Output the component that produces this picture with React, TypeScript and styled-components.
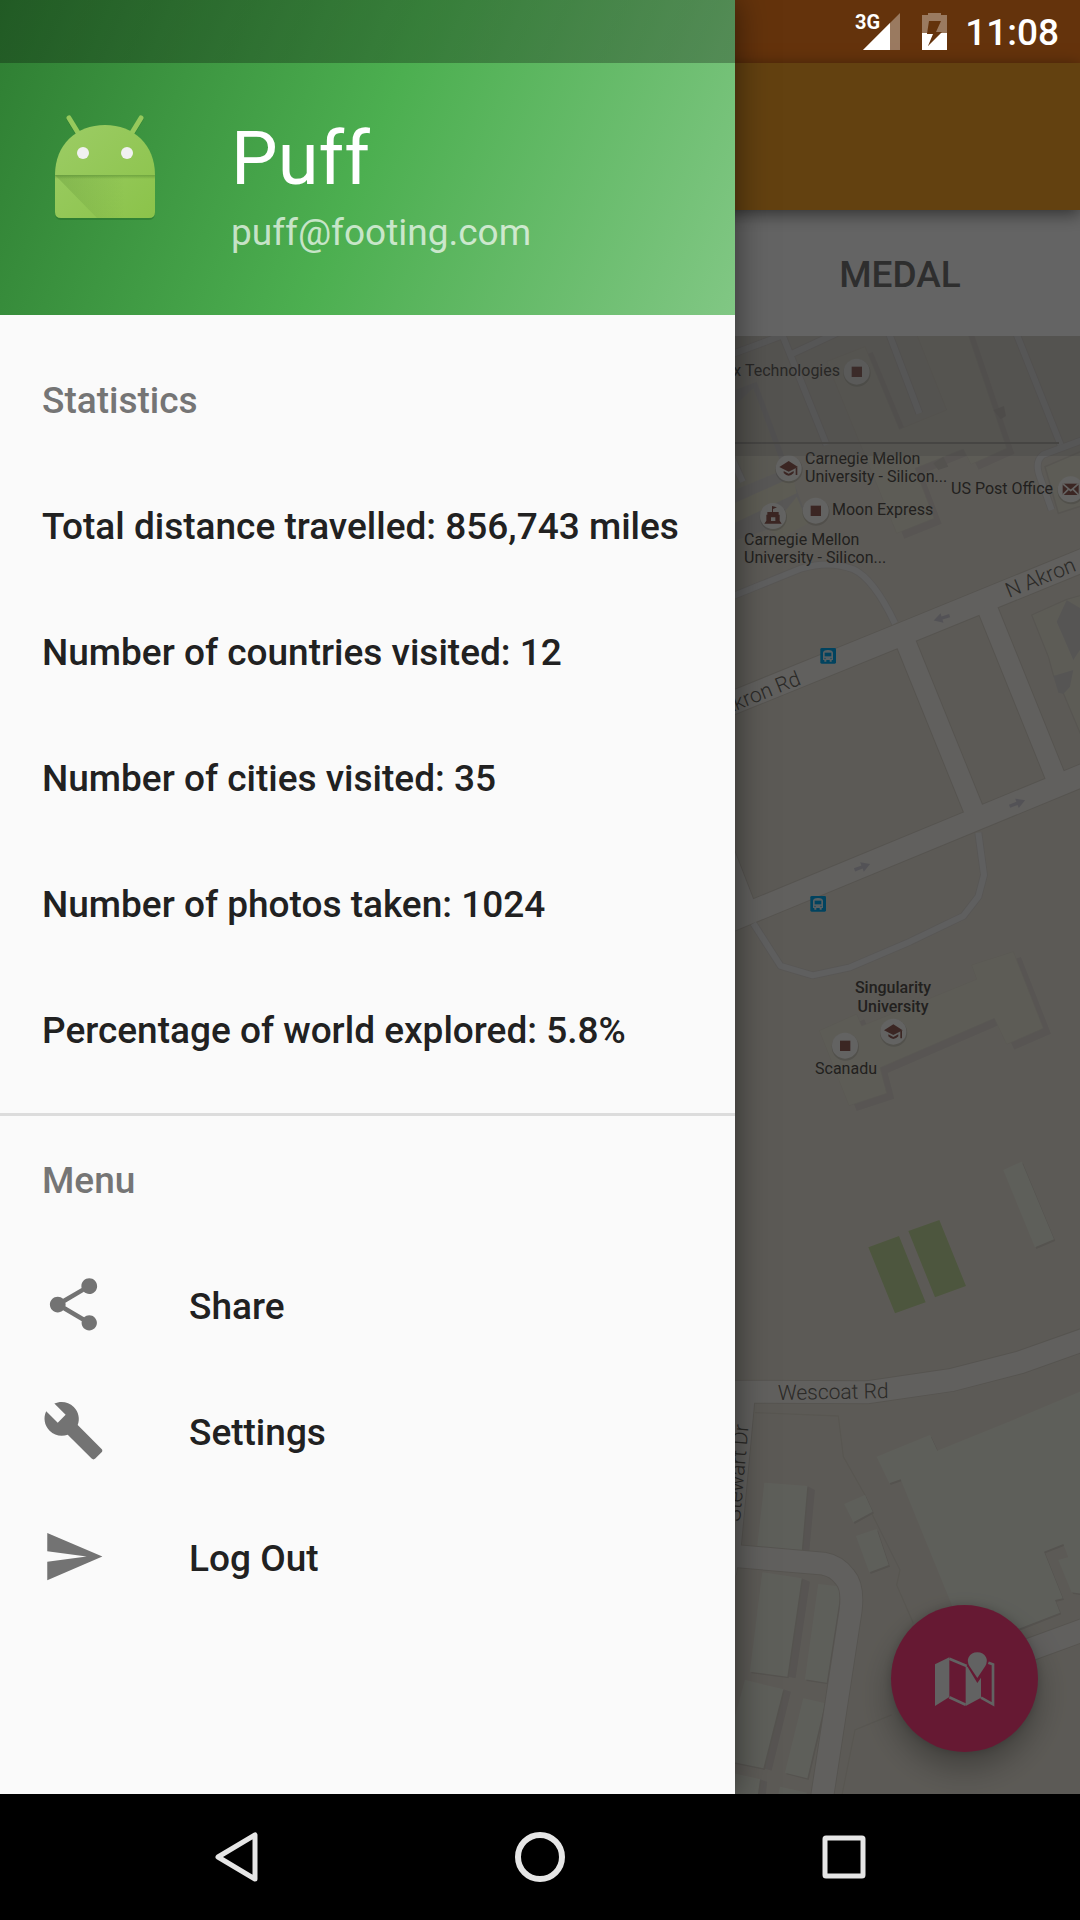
import React from "react";
import styled, { createGlobalStyle } from "styled-components";
import { MdBuild, MdSend, MdShare } from "react-icons/md";

const GlobalStyle = createGlobalStyle`
  *, *::before, *::after { box-sizing: border-box; }
  body {
    margin: 0;
    background: #000;
    font-family: Roboto, "Noto Sans", sans-serif;
  }
  button, input { font: inherit; color: inherit; border: 0; background: none; padding: 0; margin: 0; }
  button { cursor: pointer; }
`;

const Device = styled.div`
  display: grid;
  grid-template-rows: 1fr 126px;
  min-height: 100vh;
`;

/* The page, the scrim, the drawer and the status icons share one cell. */
const Stack = styled.div`
  display: grid;
  grid-template: "layer" 1fr / minmax(0, 1fr);
  overflow: hidden;

  > * { grid-area: layer; }
`;

const Page = styled.main`
  display: flex;
  flex-direction: column;
`;

const StatusBackdrop = styled.div`
  height: 63px;
  background: #fa7f1e;
`;

const Toolbar = styled.header`
  height: 147px;
  background: #f7a228;
  position: relative;
  box-shadow: 0 4px 16px rgba(0, 0, 0, 0.5);
`;

const Tabs = styled.nav`
  display: grid;
  grid-template-columns: repeat(3, 1fr);
  height: 126px;
  background: #fafafa;
`;

const Tab = styled.button`
  grid-column: 3;
  padding-top: 2px;
  font-size: 37px;
  font-weight: 500;
  color: #737373;
`;

const MapArea = styled.section`
  flex: 1;
  display: grid;
  grid-template: "map" 1fr / minmax(0, 1fr);
  background: #e7e2d7;

  > * { grid-area: map; }
`;

const MapSvg = styled.svg`
  width: 100%;
  height: 100%;
  min-height: 1458px;
  font-size: 16px;
`;

const SearchStrip = styled.label`
  align-self: start;
  height: 120px;
  padding: 0 21px 12px;
  display: flex;
  background: rgba(150, 150, 150, 0.25);
`;

const SearchInput = styled.input`
  flex: 1;
  min-width: 0;
  border-bottom: 2px solid #aeaca8;
  font-size: 37px;
`;

const Fab = styled.button`
  align-self: end;
  justify-self: end;
  width: 147px;
  height: 147px;
  margin: 42px;
  border-radius: 50%;
  display: grid;
  place-items: center;
  background: #ff4081;
  color: #f4f4f4;
  box-shadow: 0 16px 32px rgba(0, 0, 0, 0.3), 0 0 8px rgba(0, 0, 0, 0.15);
`;

const Scrim = styled.div`
  background: rgba(0, 0, 0, 0.6);
  z-index: 1;
`;

const Drawer = styled.aside`
  z-index: 2;
  width: 735px;
  max-width: 100%;
  background: #fafafa;
  color: #212121;
  box-shadow: 0 0 32px rgba(0, 0, 0, 0.5);
`;

const Account = styled.div`
  display: flex;
  align-items: center;
  gap: 63px;
  height: 315px;
  padding: 63px 42px 8px;
  color: #fff;
  background:
    linear-gradient(rgba(0, 0, 0, 0.28) 0 63px, transparent 63px),
    linear-gradient(113deg, #2e7d32, #4caf50 50%, #81c784);
`;

const AccountText = styled.div`
  display: flex;
  flex-direction: column;
  gap: 8px;
`;

const AccountName = styled.h1`
  margin: 0;
  font-size: 74px;
  line-height: 88px;
  font-weight: 400;
`;

const AccountMail = styled.span`
  font-size: 37px;
  line-height: 44px;
  color: rgba(255, 255, 255, 0.7);
`;

const Group = styled.section<{ $divided?: boolean }>`
  padding: ${(p) => (p.$divided ? "0" : "21px 0")};
  border-top: ${(p) => (p.$divided ? "3px solid #dcdcdc" : "0")};
`;

const GroupTitle = styled.h2`
  margin: 0;
  padding: 0 42px;
  font-size: 37px;
  line-height: 130px;
  height: 126px;
  font-weight: 500;
  color: #757575;
`;

const List = styled.ul`
  margin: 0;
  padding: 0;
  list-style: none;
`;

const Stat = styled.li`
  padding: 0 42px;
  font-size: 37px;
  line-height: 130px;
  height: 126px;
  font-weight: 500;
`;

const MenuButton = styled.button`
  display: flex;
  align-items: center;
  gap: 84px;
  width: 100%;
  height: 126px;
  padding: 0 42px 2px;
  font-size: 37px;
  font-weight: 500;
  text-align: left;

  svg { color: #737373; }
`;

const MenuLabel = styled.span`
  padding-top: 4px;
`;

const StatusIcons = styled.div`
  z-index: 3;
  align-self: start;
  justify-self: end;
  display: flex;
  align-items: center;
  height: 63px;
  padding-right: 21px;
  gap: 18px;
  color: #fff;
`;

const Clock = styled.time`
  padding-top: 2px;
  font-size: 37px;
  font-weight: 500;
`;

const NavBar = styled.nav`
  z-index: 1;
  display: flex;
  justify-content: center;
  background: #000;
  color: #e6e6e6;
`;

const NavButton = styled.button`
  flex: 0 1 304px;
  display: grid;
  place-items: center;
`;

const stats = [
  "Total distance travelled: 856,743 miles",
  "Number of countries visited: 12",
  "Number of cities visited: 35",
  "Number of photos taken: 1024",
  "Percentage of world explored: 5.8%",
];

const menu = [
  { label: "Share", Icon: MdShare },
  { label: "Settings", Icon: MdBuild },
  { label: "Log Out", Icon: MdSend },
];

function Robot() {
  return (
    <svg width="126" height="140" viewBox="0 0 126 140" aria-hidden="true">
      <defs>
        <linearGradient id="robot" x1="0" y1="0" x2="1" y2="1">
          <stop offset="0" stopColor="#9ccc65" />
          <stop offset="1" stopColor="#8bc34a" />
        </linearGradient>
        <linearGradient id="fold" x1="0" y1="0" x2="1" y2="0">
          <stop offset="0" stopColor="#558b2f" stopOpacity=".3" />
          <stop offset=".7" stopColor="#558b2f" stopOpacity="0" />
        </linearGradient>
        <linearGradient id="lip" x1="0" y1="0" x2="0" y2="1">
          <stop offset="0" stopColor="#33691e" stopOpacity=".35" />
          <stop offset="1" stopColor="#33691e" stopOpacity="0" />
        </linearGradient>
      </defs>
      <path d="M13 61V98q0 7 6 7H107q6 0 6-7V61z" fill="#1b5e20" opacity=".35" />
      <g stroke="#1b5e20" strokeOpacity=".35" strokeWidth="5" strokeLinecap="round">
        <path d="M27 4L38 22M99 4L88 22" />
      </g>
      <path d="M27 3L38 21M99 3L88 21" stroke="#96c95c" strokeWidth="5" strokeLinecap="round" />
      <path d="M13 60V97q0 6 6 6H107q6 0 6-6V60C113 30 92 10 63 10S13 30 13 60z" fill="url(#robot)" />
      <path d="M13 60H113V103H55z" fill="url(#fold)" />
      <rect x="13" y="60" width="100" height="4" fill="url(#lip)" />
      <circle cx="41" cy="38" r="6" fill="#f1f1f1" />
      <circle cx="85" cy="38" r="6" fill="#f1f1f1" />
    </svg>
  );
}

function Poi({ x, y, kind }: { x: number; y: number; kind: "square" | "cap" | "school" | "mail" }) {
  return (
    <g transform={`translate(${x} ${y})`}>
      <circle cx="1" cy="4" r="41" fill="#000" opacity=".12" />
      <circle r="39" fill="#f8f8f6" />
      <g fill="#945f58">
        {kind === "square" && <rect x="-15" y="-15" width="31" height="31" />}
        {kind === "cap" && (
          <>
            <path d="M-28-4L0-22L28-4L0 10z" />
            <path d="M-15 8L0 16L15 8V14Q0 30-15 14z" />
            <path d="M21-2h5V20h-5z" />
          </>
        )}
        {kind === "school" && (
          <path d="M-3-30L12-26L0-21V-12H17V-4H20V14L26 23H-26L-20 14V-4H-17V-12H-3zM-6 4V15H7V4z" fillRule="evenodd" />
        )}
        {kind === "mail" && (
          <>
            <rect x="-24" y="-17" width="48" height="34" />
            <path d="M-24-17L0 4L24-17M-24 17L-7 0M24 17L7 0" fill="none" stroke="#f8f8f6" strokeWidth="5" />
          </>
        )}
      </g>
    </g>
  );
}

function BusStop({ x, y }: { x: number; y: number }) {
  return (
    <g transform={`translate(${x} ${y})`}>
      <rect x="-23" y="-23" width="47" height="47" rx="4" fill="#04a8ee" />
      <path d="M-15 13V-8Q-15-17 0-17T15-8V13H11V18H5V13H-5V18H-11V13z" fill="#dceef5" />
      <rect x="-10" y="-9" width="20" height="11" fill="#04a8ee" />
      <circle cx="-9" cy="8" r="2" fill="#04a8ee" />
      <circle cx="9" cy="8" r="2" fill="#04a8ee" />
    </g>
  );
}

function Arrow({ x, y, turn }: { x: number; y: number; turn: number }) {
  return (
    <path
      transform={`translate(${x} ${y}) rotate(${turn})`}
      d="M-24-5H0V-15L26 0L0 15V5H-24z"
      fill="#cfced6"
    />
  );
}

const roads = [
  { d: "M-60 1146L500 919L1150 654", w: 68 },
  { d: "M-60 1797L1150 1298", w: 66 },
  { d: "M526 934L735 1450", w: 59 },
  { d: "M770 830L978 1345", w: 59 },
  { d: "M-20 1560L50 1740", w: 60 },
  { d: "M-40 3185L410 3187L665 3150L870 3097L1110 3012", w: 66 },
  { d: "M42 3190L0 3642L-15 3730", w: 66 },
  { d: "M-20 3675L280 3701Q320 3708 345 3742Q370 3770 362 3840L275 4410", w: 66 },
  { d: "M800 3995L1110 3882", w: 66 },
];

const lanes = [
  "M745 1508L762 1635L745 1700L700 1758L540 1835L360 1912L248 1936L152 1908L70 1780",
  "M-20 810L215 715Q300 690 370 718Q430 745 495 880",
  "M-20 82L160 15M155 10L290 345M185 72L340 0M475 5L568 250M855 0L992 345",
  "M1080 322L940 374Q910 395 933 450L965 540",
  "M-10 350L38 455",
];

const whiteBuildings = [
  "M440 3380L600 3315L622 3362L850 3270L1110 3160V3800L1025 3787L985 3690L1015 3682L1000 3642L942 3665L998 3805L975 3810L990 3848L870 3895L700 3910L512 3448L478 3460z",
  "M343 3522L405 3495L428 3545L370 3577z",
  "M378 3618L440 3597L476 3705L418 3727z",
  "M103 3458L232 3468L215 3665L82 3650z",
  "M97 3727L215 3745L172 4040L60 4025z",
  "M265 3762L335 3770L290 4058L225 4048z",
  "M45 4050L160 4078L100 4315L-20 4290z",
  "M220 4105L285 4120L232 4345L165 4328z",
  "M-10 4325L90 4348L80 4420H-20z",
  "M150 4370L230 4388L225 4420H140z",
  "M820 2520L875 2495L972 2728L915 2752z",
];

const creamBuildings = [
  "M268 2102L380 2052L395 2088L740 1948L725 1905L850 1865L940 2095L830 2143L793 2065L450 2213L470 2290L357 2327z",
  "M290 95L405 50L508 298L650 240L555 0H710L830 355L723 403L700 357L555 415L612 565L500 610z",
];

function StreetMap() {
  return (
    <MapSvg viewBox="0 336 1080 1458" preserveAspectRatio="xMaxYMin slice" role="img" aria-label="Map">
      <g transform="translate(730 330) scale(.33333)" strokeLinejoin="round">
        <path d="M-10 190L80 155L230 560L-10 640z" fill="#dcdad7" />
        <path d="M-10 250L70 175L160 420L-10 490z" fill="#e3e0d3" />
        <path d="M-10 530L190 440L200 490L-10 590zM120 600L200 500L235 580L150 625z" fill="#e8e5d2" />
        {creamBuildings.map((d) => (
          <path key={d} d={d} fill="#dbd5cf" transform="translate(23 16)" />
        ))}
        {creamBuildings.map((d) => (
          <path key={d} d={d} fill="#e9e6d8" stroke="#e0dbcf" strokeWidth="2" />
        ))}
        <path d="M790 240L822 228L828 258L812 268zM610 400L640 380L655 410L625 420z" fill="#d2ccc6" />
        <path d="M945 410L1110 340V510L985 550z" fill="#e9e7d8" stroke="#dad5cb" strokeWidth="5" />
        <path d="M905 855L1010 808L1110 780V1350L1000 1090L970 1035L955 980z" fill="#e9e7d8" stroke="#dad5cb" strokeWidth="4" />
        <path d="M980 875L1010 810L1110 870L1030 990zM970 1038L1030 1020L1020 1070L1000 1092L985 1088z" fill="#d8d5d2" />
        <path
          d="M75 3248L325 3258L340 3380L405 3495L430 3560L510 3720L500 3765L550 3880M485 4155L375 4200L335 4400"
          fill="none" stroke="#dcd7cb" strokeWidth="4"
        />
        <g fill="#d9d3cd">
          <path d="M232 3468L255 3480L238 3665H215zM215 3745L240 3755L197 4045L172 4040zM160 4078L183 4085L125 4322L100 4315z" />
          <path d="M90 4348L112 4355L105 4420H80z" />
        </g>
        {whiteBuildings.map((d) => (
          <path key={d} d={d} fill="#d4cfc6" transform="translate(4 5)" />
        ))}
        {whiteBuildings.map((d) => (
          <path key={d} d={d} fill="#ebeee2" />
        ))}
        <path d="M415 2752L507 2718L587 2917L495 2950zM535 2703L628 2670L708 2868L615 2902z" fill="#c1d79c" />
        <g fill="none">
          {lanes.map((d) => (
            <path key={d} d={d} stroke="#dcd8d3" strokeWidth="24" />
          ))}
          {roads.map(({ d, w }) => (
            <path key={d} d={d} stroke="#d6d1c7" strokeWidth={w + 6} />
          ))}
          {lanes.map((d) => (
            <path key={d} d={d} stroke="#ededee" strokeWidth="18" />
          ))}
          {roads.map(({ d, w }) => (
            <path key={d} d={d} stroke="#f2efeb" strokeWidth={w} />
          ))}
        </g>
        <Arrow x={636} y={864} turn={163} />
        <Arrow x={861} y={1420} turn={-21} />
        <Arrow x={396} y={1611} turn={-21} />
        <BusStop x={294} y={977} />
        <BusStop x={264} y={1721} />
        <Poi x={380} y={125} kind="square" />
        <Poi x={176} y={415} kind="cap" />
        <Poi x={129} y={558} kind="school" />
        <Poi x={257} y={542} kind="square" />
        <Poi x={1022} y={478} kind="mail" />
        <Poi x={345} y={2147} kind="square" />
        <Poi x={490} y={2105} kind="cap" />
      </g>
      <g fill="#55524e">
        <text x="840" y="376" textAnchor="end">x Technologies</text>
        <text x="805" y="464">Carnegie Mellon</text>
        <text x="805" y="482">University - Silicon...</text>
        <text x="1053" y="494" textAnchor="end">US Post Office</text>
        <text x="832" y="515">Moon Express</text>
        <text x="744" y="545">Carnegie Mellon</text>
        <text x="744" y="563">University - Silicon...</text>
        <text x="893" y="993" textAnchor="middle" fontWeight="500">Singularity</text>
        <text x="893" y="1012" textAnchor="middle" fontWeight="500">University</text>
        <text x="846" y="1074" textAnchor="middle">Scanadu</text>
      </g>
      <g fill="#6c6962" fontSize="21" fontWeight="300">
        <text transform="translate(1009 598) rotate(-22)">N Akron</text>
        <text transform="translate(802 684) rotate(-22)" textAnchor="end">N Akron Rd</text>
        <text transform="translate(778 1400) rotate(-1)">Wescoat Rd</text>
        <text transform="translate(740 1522) rotate(-85)">Stewart Dr</text>
      </g>
    </MapSvg>
  );
}

export default function App() {
  return (
    <>
      <GlobalStyle />
      <Device>
        <Stack>
          <Page>
            <StatusBackdrop />
            <Toolbar />
            <Tabs>
              <Tab type="button">MEDAL</Tab>
            </Tabs>
            <MapArea>
              <StreetMap />
              <SearchStrip>
                <SearchInput type="text" aria-label="Search the map" />
              </SearchStrip>
              <Fab type="button" aria-label="Open map">
                <svg width="61" height="56" viewBox="610 930 183 168" aria-hidden="true">
                  <path fill="currentColor" d="M613 970L656 949V1068L613 1095z" />
                  <path fill="currentColor" d="M705 974L711 978L740 1026L751 1010V1070L705 1095z" />
                  <path
                    fill="none" stroke="currentColor" strokeWidth="8"
                    d="M656 953L708 975M656 1069L705 1091M751 1070L787 1090V970L773 965"
                  />
                  <path
                    fill="currentColor" stroke="#ff4081" strokeWidth="8" paintOrder="stroke"
                    d="M740 1011L716 975Q708 960 714 949Q722 934 740 934Q758 934 766 949Q772 960 764 975z"
                  />
                </svg>
              </Fab>
            </MapArea>
          </Page>
          <Scrim />
          <Drawer>
            <Account>
              <Robot />
              <AccountText>
                <AccountName>Puff</AccountName>
                <AccountMail>puff@footing.com</AccountMail>
              </AccountText>
            </Account>
            <Group>
              <GroupTitle>Statistics</GroupTitle>
              <List>
                {stats.map((text) => (
                  <Stat key={text}>{text}</Stat>
                ))}
              </List>
            </Group>
            <Group $divided>
              <GroupTitle>Menu</GroupTitle>
              <List>
                {menu.map(({ label, Icon }) => (
                  <li key={label}>
                    <MenuButton type="button">
                      <Icon size={63} />
                      <MenuLabel>{label}</MenuLabel>
                    </MenuButton>
                  </li>
                ))}
              </List>
            </Group>
          </Drawer>
          <StatusIcons>
            <svg width="49" height="52" viewBox="0 -6 49 52" role="img" aria-label="Mobile signal">
              <path d="M46 1V38H9z" fill="#fff" opacity=".35" />
              <path d="M36 11V38H9z" fill="#fff" />
              <text x="1" y="17" fontSize="20" fontWeight="700" fill="#fff">3G</text>
            </svg>
            <svg width="26" height="40" viewBox="0 0 26 40" role="img" aria-label="Battery charging">
              <defs>
                <clipPath id="empty"><rect width="28" height="21" /></clipPath>
                <clipPath id="charged"><rect y="21" width="28" height="19" /></clipPath>
                <path
                  id="cell" fillRule="evenodd" fill="#fff"
                  d="M1 3H7V1H20V3H26V38H1zM8 9L6 22H12L7 34L21 20H15L20 9z"
                />
              </defs>
              <use href="#cell" clipPath="url(#empty)" opacity=".35" />
              <use href="#cell" clipPath="url(#charged)" />
            </svg>
            <Clock>11:08</Clock>
          </StatusIcons>
        </Stack>
        <NavBar>
          <NavButton type="button" aria-label="Back">
            <svg width="50" height="50" viewBox="0 0 50 50" fill="none" stroke="currentColor" strokeWidth="5" strokeLinejoin="round">
              <path d="M44 3V47L7 25z" />
            </svg>
          </NavButton>
          <NavButton type="button" aria-label="Home">
            <svg width="50" height="50" viewBox="0 0 50 50" fill="none" stroke="currentColor" strokeWidth="6">
              <circle cx="25" cy="25" r="22" />
            </svg>
          </NavButton>
          <NavButton type="button" aria-label="Recent apps">
            <svg width="50" height="50" viewBox="0 0 50 50" fill="none" stroke="currentColor" strokeWidth="5">
              <rect x="6" y="6" width="38" height="38" rx="1" />
            </svg>
          </NavButton>
        </NavBar>
      </Device>
    </>
  );
}
